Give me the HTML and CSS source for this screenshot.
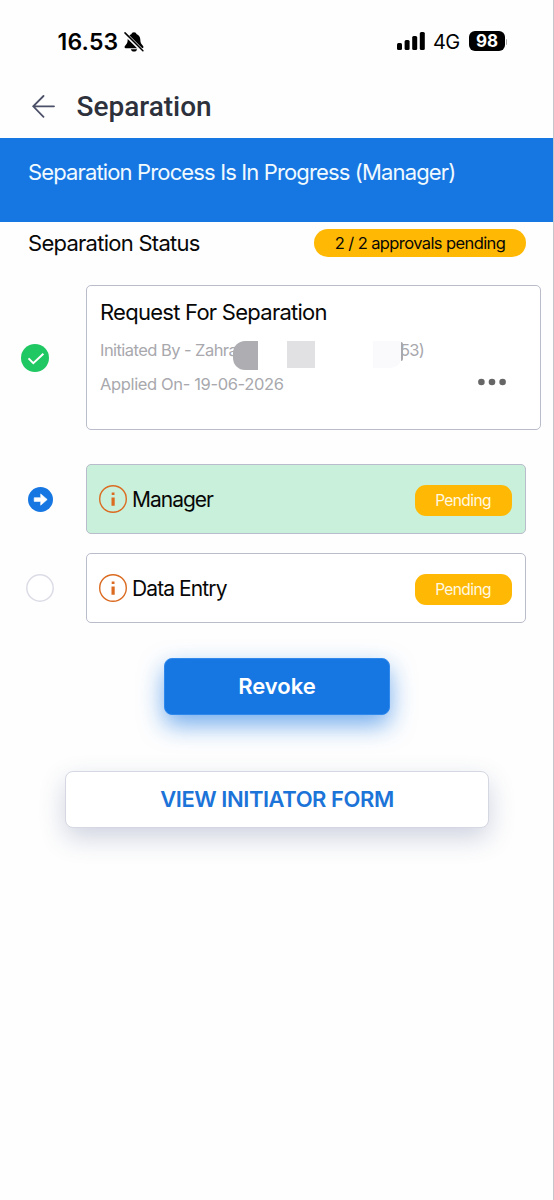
FILE: index.html
```html
<!DOCTYPE html>
<html lang="en">
<head>
<meta charset="utf-8">
<title>Separation</title>
<link rel="stylesheet" href="styles.css">
</head>
<body>
<div class="screen">
  <div class="status-bar">
    <div class="clock">
      <span class="time">16.53</span>
      <svg class="bell" width="20" height="20" viewBox="0 0 20 20">
        <path d="M10 .2c-1.5 0-2.300.8-2.400 1.800C5 3 3.800 5 3.700 7.500c-.1 3-.8 4.300-2 5.600-.9 1-1.200 1.500-1.100 2.100.1.700.700 1 1.500 1h15.800c.8 0 1.400-.3 1.500-1 .1-.6-.2-1.100-1.100-2.100-1.200-1.300-1.900-2.600-2-5.600C16.200 5 15 3 12.400 2 12.300 1 11.500.2 10 .2zM6.900 17.300h6.200c-.3 1.400-1.500 2.300-3.100 2.300s-2.800-.9-3.100-2.300z"/>
        <path class="bell-gap" d="M.7 1.400 19 19.600"/>
        <path class="bell-slash" d="M1 .9 18.900 18.700"/>
      </svg>
    </div>
    <div class="signals">
      <svg class="bars" width="28" height="18" viewBox="0 0 28 18">
        <rect x="0" y="11" width="5" height="7" rx="1.500"/>
        <rect x="7.600" y="8" width="5" height="10" rx="1.500"/>
        <rect x="15.200" y="4" width="5" height="14" rx="1.500"/>
        <rect x="22.800" y="0" width="5" height="18" rx="1.500"/>
      </svg>
      <span class="network">4G</span>
      <span class="battery">98</span>
      <span class="battery-tip"></span>
    </div>
  </div>

  <header class="header">
    <svg class="back" width="23" height="23" viewBox="0 0 23 23"><path d="M22 11.300H1.200M11.500 1 1.200 11.300 11.500 21.800"/></svg>
    <h1 class="title">Separation</h1>
  </header>

  <div class="banner"><span class="banner-text">Separation Process Is In Progress (Manager)</span></div>

  <div class="summary">
    <span class="summary-label">Separation Status</span>
    <span class="summary-pill"><span class="summary-count">2 / 2 approvals pending</span></span>
  </div>

  <main class="steps">
    <div class="step step-request">
      <svg class="marker" width="28" height="28" viewBox="0 0 28 28">
        <circle cx="14" cy="14" r="14" fill="#20c863"/>
        <path d="M7.500 14.400 12.300 19.200 22.400 9.800" fill="none" stroke="#fff" stroke-width="2"/>
      </svg>
      <section class="card card-request">
        <h2 class="card-title">Request For Separation</h2>
        <p class="meta initiated"><span class="initiator">Initiated By - Zahra</span><span class="initiator-id">53)</span>
          <i class="mask mask-a"></i><i class="mask mask-b"></i><i class="mask mask-c"></i><i class="mask mask-d"></i>
        </p>
        <div class="applied">
          <p class="meta applied-date">Applied On- 19-06-2026</p>
          <svg class="more" width="28" height="8" viewBox="0 0 28 8"><circle cx="3.400" cy="4" r="3.300"/><circle cx="14" cy="4" r="3.300"/><circle cx="24.600" cy="4" r="3.300"/></svg>
        </div>
      </section>
    </div>

    <div class="step step-manager">
      <svg class="marker" width="25" height="25" viewBox="0 0 25 25">
        <circle cx="12.500" cy="12.500" r="12.500" fill="#1777e2"/>
        <path d="M6.200 10.700h6.500V6.900l6.500 5.600-6.500 5.700v-3.800H6.200z" fill="#fff" stroke="#fff" stroke-width=".6" stroke-linejoin="round"/>
      </svg>
      <section class="card card-approval card-current">
        <svg class="info" width="28" height="28" viewBox="0 0 28 28"><circle cx="14" cy="14" r="13.300"/><path d="M12.700 7.400h2.800v2.600h-2.800zM12.500 12.600h3.200v8.200h-3.200z"/></svg>
        <span class="role role-manager">Manager</span>
        <span class="badge">Pending</span>
      </section>
    </div>

    <div class="step step-entry">
      <svg class="marker" width="28" height="28" viewBox="0 0 28 28"><circle cx="14" cy="14" r="13.200" fill="#fff" stroke="#dcdce7" stroke-width="1.500"/></svg>
      <section class="card card-approval">
        <svg class="info" width="28" height="28" viewBox="0 0 28 28"><circle cx="14" cy="14" r="13.300"/><path d="M12.700 7.400h2.800v2.600h-2.800zM12.500 12.600h3.200v8.200h-3.200z"/></svg>
        <span class="role role-entry">Data Entry</span>
        <span class="badge">Pending</span>
      </section>
    </div>
  </main>

  <div class="actions">
    <button class="button revoke">Revoke</button>
    <button class="button view-form">VIEW INITIATOR FORM</button>
  </div>
</div>
</body>
</html>
```
FILE: styles.css
```css
* { box-sizing: border-box; }
body { margin: 0; background: #fff; font-family: Inter, "Liberation Sans", sans-serif; color: #080808; }
h1, h2, p { margin: 0; font-weight: 400; }
span, h1, h2, p { white-space: nowrap; }
.screen { width: 554px; height: 1200px; overflow: hidden; background: #fefefe; border-right: 1px solid #c6c6ca; }

.status-bar { height: 76px; padding: 7px 46px 0 57.500px; display: flex; align-items: center; justify-content: space-between; }
.clock { display: flex; align-items: center; gap: 6px; }
.time { font-size: 23px; font-weight: 600; line-height: 28px; letter-spacing: .2px; color: #000; }
.bell-gap { stroke: #fefefe; stroke-width: 3.600; }
.bell-slash { stroke: #000; stroke-width: 1.500; stroke-linecap: round; }
.signals { display: flex; align-items: center; color: #000; }
.bars { margin-top: -1px; }
.network { margin-left: 8px; width: 28px; font-size: 20px; line-height: 24px; letter-spacing: -.6px; }
.battery { margin: -1px 0 0 8px; width: 36px; height: 20px; border-radius: 6px; background: #000; color: #fff; font-size: 17px; font-weight: 700; line-height: 20px; text-align: center; }
.battery-tip { margin-left: 1px; width: 1px; height: 6px; background: #aaa; border-radius: 0 2px 2px 0; }

.header { height: 61.500px; padding-left: 32px; display: flex; align-items: center; gap: 21.500px; }
.back { fill: none; stroke: #4b5068; stroke-width: 1.800; stroke-linecap: round; }
.title { font-family: Roboto, sans-serif; font-size: 28px; font-weight: 500; line-height: 36px; color: #2d313c; }

.banner { height: 84.500px; padding: 19.500px 28px 0; background: #1777e2; color: #f0faff; font-size: 22px; line-height: 30px; }
.banner-text { letter-spacing: -.86px; }

.summary { height: 42px; padding: 0 27px 0 28px; display: flex; align-items: center; justify-content: space-between; }
.summary-label { font-size: 22px; letter-spacing: -.73px; }
.summary-pill { width: 212px; height: 28px; border-radius: 14px; background: #ffb803; text-align: center; font-size: 16.500px; line-height: 28px; letter-spacing: -.6px; }

.steps { padding-top: 21px; display: flex; flex-direction: column; gap: 19px; }
.step { display: grid; grid-template-columns: 86px 1fr; align-items: center; padding-right: 27px; }
.step-request { padding-right: 12px; margin-bottom: 15px; }
.step-request .marker { margin-left: 21px; }
.step-manager .marker { margin-left: 28px; margin-top: 1px; }
.step-entry .marker { margin-left: 25.500px; }
.card { border: 1.500px solid #b9bccb; border-radius: 5px; background: #fff; }
.card-request { height: 145px; padding: 11px 13px; }
.card-title { font-size: 22px; line-height: 30px; letter-spacing: -.74px; }
.meta { color: #a8a8ad; font-size: 16.500px; line-height: 24px; letter-spacing: -.36px; }
.initiated { position: relative; display: flex; margin-top: 11px; }
.initiator { width: 300px; letter-spacing: -.55px; }
.initiator-id { letter-spacing: -.7px; }
.mask { position: absolute; display: block; }
.mask-a { left: 133px; top: 3px; width: 25px; height: 29px; background: #aeaeb2; border-radius: 12px 0 0 12px; }
.mask-b { left: 187px; top: 3px; width: 28px; height: 27px; background: #e1e1e4; }
.mask-c { left: 273px; top: 3px; width: 28px; height: 27px; background: #fafafc; border-radius: 0 0 10px 0; }
.mask-d { left: 301px; top: 4px; width: 2px; height: 19px; background: #a8a8ad; border-radius: 0 2px 2px 0; }
.applied { margin-top: 7px; display: flex; justify-content: space-between; padding-right: 21px; }
.applied-date { margin-top: 3px; }
.more { margin-top: 8.500px; fill: #666; }

.card-approval { height: 70px; padding: 0 13px 0 11.500px; display: flex; align-items: center; }
.card-current { background: #c9f0da; }
.info { flex: none; fill: #db6b20; }
.info circle { fill: none; stroke: #db6b20; stroke-width: 1.400; }
.role { margin-left: 5.500px; margin-top: 2px; font-size: 21px; line-height: 28px; letter-spacing: -.9px; }
.role-manager { letter-spacing: -1px; }
.badge { margin-left: auto; margin-top: 3px; width: 97px; height: 31px; border-radius: 11px; background: #ffb803; color: #fff8e4; font-size: 15.500px; line-height: 31px; letter-spacing: -.6px; padding-right: 1px; text-align: center; }

.actions { padding: 35px 0 0 1px; display: flex; flex-direction: column; align-items: center; gap: 56px; }
.button { font-family: inherit; font-size: 22px; font-weight: 600; line-height: 28px; border-radius: 8px; padding: 0 0 2px; }
.revoke { width: 226px; height: 57px; border: 1px solid #2f88ec; background: #1777e2; color: #fff; box-shadow: 0 10px 24px rgba(23, 119, 226, .6); }
.view-form { width: 424px; height: 57px; border: 1px solid #d5d8e2; background: #fff; color: #1c73d8; letter-spacing: -.45px; box-shadow: 0 10px 26px rgba(60, 75, 130, .24); }
```
